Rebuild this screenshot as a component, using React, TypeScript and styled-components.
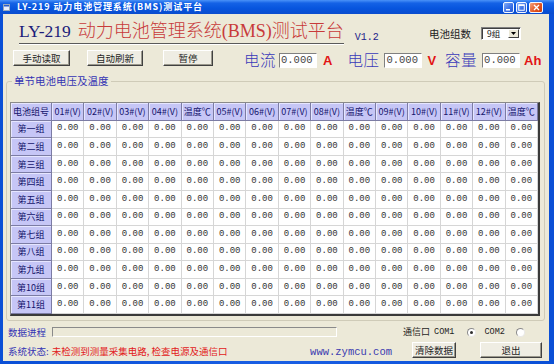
import React from 'react';
import styled, { createGlobalStyle } from 'styled-components';

const CJK = `"Noto Sans CJK SC", "Noto Sans", sans-serif`;
const SERIF = `"Liberation Serif", "Noto Sans CJK SC", serif`;
const MONO = `"Liberation Mono", monospace`;

const Global = createGlobalStyle`
  html, body { margin: 0; padding: 0; background: #ece9d8; overflow: hidden; }
  * { box-sizing: border-box; }
`;

const Frame = styled.div`
  width: 554px;
  height: 364px;
  display: flex;
  flex-direction: column;
  background: #0a4fd6;
`;

const TitleBar = styled.div`
  height: 14px;
  flex: none;
  display: flex;
  align-items: center;
  padding: 0 11px 0 3px;
  background: linear-gradient(180deg, #4a92f8 0%, #1462e6 22%, #0755de 60%, #0a4cce 100%);
`;

const TitleCaption = styled.div`
  margin-left: 7px;
  color: #fff;
  font: bold 9px/14px ${CJK};
  letter-spacing: 0.9px;
  white-space: nowrap;
`;

const WinButtons = styled.div`
  margin-left: auto;
  display: flex;
  align-items: center;
  gap: 2px;
`;

const WinBtn = styled.div<{ $close?: boolean }>`
  width: ${(p) => (p.$close ? 14 : 11)}px;
  height: 11px;
  border: 1px solid #f4f8ff;
  border-radius: 2px;
  display: flex;
  align-items: center;
  justify-content: center;
  background: ${(p) =>
    p.$close
      ? 'linear-gradient(135deg, #f6a27c, #e2521e 60%, #c83c10)'
      : 'linear-gradient(135deg, #82acf8, #3a70e6 60%, #2458d4)'};
`;

const Body = styled.div`
  flex: 1;
  display: flex;
  padding: 0 5px 3px 3px;
  background: linear-gradient(90deg, #0a4fd6, #1a5fe4 50%, #0a4fd6);
`;

const Client = styled.div`
  flex: 1;
  display: flex;
  flex-direction: column;
  background: #ece9d8;
`;

/* ---------- header ---------- */
const HeaderRow = styled.div`
  height: 33px;
  flex: none;
  display: flex;
  align-items: flex-start;
  padding: 0 28px 0 16px;
`;

const BigTitle = styled.div`
  margin-top: 6px;
  display: flex;
  align-items: baseline;
  line-height: 22px;
  padding-bottom: 1px;
  border-bottom: 1px solid #5a5a5a;
  box-shadow: 0 1px 0 #ffffff;
  white-space: nowrap;
`;

const Model = styled.span`
  font-family: ${SERIF};
  font-size: 17.5px;
  color: #1c1c7a;
  margin-right: 7px;
`;

const RedTitle = styled.span`
  font-family: ${SERIF};
  font-size: 18px;
  font-weight: 300;
  color: #c83a3a;
`;

const Version = styled.div`
  margin: 18px 0 0 11px;
  font: 10px/12px ${MONO};
  color: #22228a;
`;

const SizeGroup = styled.div`
  margin: 13px 0 0 auto;
  display: flex;
  align-items: center;
  gap: 10px;
`;

const SmallLabel = styled.span`
  font: 10.5px/12px ${CJK};
  color: #222;
`;

const Select = styled.div`
  width: 40px;
  height: 13px;
  display: flex;
  align-items: center;
  padding: 0 1px 0 5px;
  background: #fff;
  border: 1px solid;
  border-color: #808080 #ffffff #ffffff #808080;
  box-shadow: inset 1px 1px 0 #404040;
  font: 8.5px/11px ${CJK};
  color: #111;
`;

const DropArrow = styled.div`
  margin-left: auto;
  width: 11px;
  height: 9px;
  display: flex;
  align-items: center;
  justify-content: center;
  background: #ece9d8;
  border: 1px solid;
  border-color: #ffffff #404040 #404040 #ffffff;
`;

/* ---------- control row ---------- */
const ControlRow = styled.div`
  margin-top: 3px;
  height: 19px;
  flex: none;
  display: flex;
  align-items: center;
  padding-left: 10px;
`;

const Btn = styled.div<{ $w: number; $ml?: number }>`
  width: ${(p) => p.$w}px;
  height: 16px;
  margin-left: ${(p) => p.$ml ?? 0}px;
  align-self: flex-start;
  display: flex;
  align-items: center;
  justify-content: center;
  background: #efede3;
  border: 1px solid;
  border-color: #ffffff #404040 #404040 #ffffff;
  box-shadow: inset -1px -1px 0 #9a988c;
  font: 9.5px/12px ${CJK};
  color: #1e1e1e;
  white-space: nowrap;
`;

const ReadLabel = styled.span<{ $ml: number }>`
  margin-left: ${(p) => p.$ml}px;
  font: 300 15.5px/19px ${CJK};
  letter-spacing: 0.5px;
  color: #3a3ab8;
  white-space: nowrap;
`;

const Field = styled.div<{ $ml: number }>`
  margin-left: ${(p) => p.$ml}px;
  width: 38px;
  height: 15px;
  margin-top: 2px;
  display: flex;
  align-items: center;
  padding-left: 1px;
  background: #fff;
  border: 1px solid;
  border-color: #808080 #ffffff #ffffff #808080;
  font: 10.5px/13px ${MONO};
  color: #444;
`;

const Unit = styled.span<{ $ml: number }>`
  margin-left: ${(p) => p.$ml}px;
  margin-top: 3px;
  font: bold 13px/16px "Liberation Sans", Arial, sans-serif;
  color: #e21414;
`;

/* ---------- group + table ---------- */
const GroupBox = styled.div`
  position: relative;
  margin: 12px 4px 0 3px;
  height: 240px;
  flex: none;
  padding: 20px 4px 4px 3px;
  border: 1px solid #cfcbb8;
  border-radius: 3px;
`;

const Legend = styled.span`
  position: absolute;
  top: -8px;
  left: 5px;
  padding: 0 2px;
  background: #ece9d8;
  font: 10.5px/14px ${CJK};
  color: #3434b4;
`;

const Table = styled.div`
  width: 530px;
  height: 214px;
  display: grid;
  grid-template-columns: 41px repeat(15, 1fr);
  grid-template-rows: repeat(12, 1fr);
  background: #fff;
  border-top: 1px solid #8a8a8a;
  border-left: 1px solid #8a8a8a;
  border-right: 2px solid #3a3a3a;
  border-bottom: 2px solid #3a3a3a;
`;

const Cell = styled.div<{ $head?: boolean }>`
  display: flex;
  align-items: center;
  justify-content: center;
  overflow: hidden;
  white-space: nowrap;
  border-right: 1px solid ${(p) => (p.$head ? '#7c7ca4' : '#d6d6d6')};
  border-bottom: 1px solid ${(p) => (p.$head ? '#7c7ca4' : '#d6d6d6')};
  background: ${(p) => (p.$head ? '#c6c6f6' : '#ffffff')};
  box-shadow: ${(p) => (p.$head ? 'inset 1px 1px 0 #e6e6ff' : 'none')};
  font: ${(p) => (p.$head ? `9px/11px ${CJK}` : `9px/11px ${MONO}`)};
  color: ${(p) => (p.$head ? '#14146c' : '#333333')};
`;

/* ---------- bottom rows ---------- */
const ProgressRow = styled.div`
  margin-top: 5px;
  height: 12px;
  flex: none;
  display: flex;
  align-items: center;
  padding-left: 5px;
`;

const BlueLabel = styled.span`
  font: 9.5px/12px ${CJK};
  color: #3434b4;
  white-space: nowrap;
`;

const Progress = styled.div`
  margin-left: 6px;
  width: 285px;
  height: 10px;
  background: #ece9d8;
  border: 1px solid;
  border-color: #8a8a8a #ffffff #ffffff #8a8a8a;
`;

const DarkLabel = styled.span<{ $ml: number }>`
  margin-left: ${(p) => p.$ml}px;
  font: 9px/12px ${CJK};
  color: #1e1e1e;
  white-space: nowrap;
`;

const ComName = styled.span<{ $ml: number }>`
  margin-left: ${(p) => p.$ml}px;
  font: 8.5px/12px ${MONO};
  color: #1e1e1e;
`;

const Radio = styled.div<{ $ml: number; $on?: boolean }>`
  margin-left: ${(p) => p.$ml}px;
  width: 9px;
  height: 9px;
  border-radius: 50%;
  border: 1px solid #8a8a8a;
  border-right-color: #e8e8e8;
  border-bottom-color: #e8e8e8;
  background: #fff;
  display: flex;
  align-items: center;
  justify-content: center;
  &::after {
    content: '';
    width: 3px;
    height: 3px;
    border-radius: 50%;
    background: ${(p) => (p.$on ? '#303030' : 'transparent')};
  }
`;

const StatusRow = styled.div`
  margin-top: 4px;
  height: 18px;
  flex: none;
  display: flex;
  align-items: center;
  padding: 0 7px 0 5px;
`;

const RedText = styled.span`
  margin-left: 3px;
  font: 9.5px/12px ${CJK};
  color: #e22020;
  white-space: nowrap;
`;

const Url = styled.span`
  margin-left: auto;
  margin-top: 2px;
  font: 10.5px/12px ${MONO};
  color: #3a3ab0;
`;

const cols = [
  '01#(V)', '02#(V)', '03#(V)', '04#(V)', '温度℃',
  '05#(V)', '06#(V)', '07#(V)', '08#(V)', '温度℃',
  '09#(V)', '10#(V)', '11#(V)', '12#(V)', '温度℃',
];
const rows = ['第一组', '第二组', '第三组', '第四组', '第五组', '第六组', '第七组', '第八组', '第九组', '第10组', '第11组'];

export default function App() {
  return (
    <>
      <Global />
      <Frame>
        <TitleBar>
          <svg width="7" height="7" viewBox="0 0 7 7">
            <rect x="0.5" y="0.5" width="6" height="6" fill="#e8eefc" stroke="#9ab" strokeWidth="1" />
            <rect x="1" y="1" width="5" height="1.5" fill="#2a5cc8" />
          </svg>
          <TitleCaption>LY-219 动力电池管理系统(BMS)测试平台</TitleCaption>
          <WinButtons>
            <WinBtn>
              <svg width="7" height="7" viewBox="0 0 7 7">
                <rect x="1" y="5" width="4" height="1.5" fill="#fff" />
              </svg>
            </WinBtn>
            <WinBtn>
              <svg width="7" height="7" viewBox="0 0 7 7">
                <rect x="0.75" y="0.75" width="5.5" height="5.5" fill="none" stroke="#fff" strokeWidth="1" />
                <rect x="0.75" y="0.75" width="5.5" height="1.2" fill="#fff" />
              </svg>
            </WinBtn>
            <WinBtn $close>
              <svg width="7" height="7" viewBox="0 0 7 7">
                <path d="M1 1 L6 6 M6 1 L1 6" stroke="#fff" strokeWidth="1.4" />
              </svg>
            </WinBtn>
          </WinButtons>
        </TitleBar>
        <Body>
          <Client>
            <HeaderRow>
              <BigTitle>
                <Model>LY-219</Model>
                <RedTitle>动力电池管理系统(BMS)测试平台</RedTitle>
              </BigTitle>
              <Version>V1.2</Version>
              <SizeGroup>
                <SmallLabel>电池组数</SmallLabel>
                <Select>
                  9组
                  <DropArrow>
                    <svg width="5" height="3" viewBox="0 0 5 3">
                      <path d="M0 0 H5 L2.5 3 Z" fill="#000" />
                    </svg>
                  </DropArrow>
                </Select>
              </SizeGroup>
            </HeaderRow>

            <ControlRow>
              <Btn $w={57}>手动读取</Btn>
              <Btn $w={56} $ml={17}>自动刷新</Btn>
              <Btn $w={50} $ml={20}>暂停</Btn>
              <ReadLabel $ml={31}>电流</ReadLabel>
              <Field $ml={3}>0.000</Field>
              <Unit $ml={6}>A</Unit>
              <ReadLabel $ml={15}>电压</ReadLabel>
              <Field $ml={5}>0.000</Field>
              <Unit $ml={5}>V</Unit>
              <ReadLabel $ml={9}>容量</ReadLabel>
              <Field $ml={5}>0.000</Field>
              <Unit $ml={4}>Ah</Unit>
            </ControlRow>

            <GroupBox>
              <Legend>单节电池电压及温度</Legend>
              <Table>
                <Cell $head>电池组号</Cell>
                {cols.map((c, i) => (
                  <Cell $head key={'h' + i}>{c}</Cell>
                ))}
                {rows.map((r) => (
                  <React.Fragment key={r}>
                    <Cell $head>{r}</Cell>
                    {cols.map((_, i) => (
                      <Cell key={r + i}>0.00</Cell>
                    ))}
                  </React.Fragment>
                ))}
              </Table>
            </GroupBox>

            <ProgressRow>
              <BlueLabel>数据进程</BlueLabel>
              <Progress />
              <DarkLabel $ml={66}>通信口</DarkLabel>
              <ComName $ml={4}>COM1</ComName>
              <Radio $ml={13} $on />
              <ComName $ml={8}>COM2</ComName>
              <Radio $ml={11} />
            </ProgressRow>

            <StatusRow>
              <BlueLabel>系统状态:</BlueLabel>
              <RedText>未检测到测量采集电路, 检查电源及通信口</RedText>
              <Url>www.zymcu.com</Url>
              <Btn $w={44} $ml={20}>清除数据</Btn>
              <Btn $w={62} $ml={24}>退出</Btn>
            </StatusRow>
          </Client>
        </Body>
      </Frame>
    </>
  );
}
